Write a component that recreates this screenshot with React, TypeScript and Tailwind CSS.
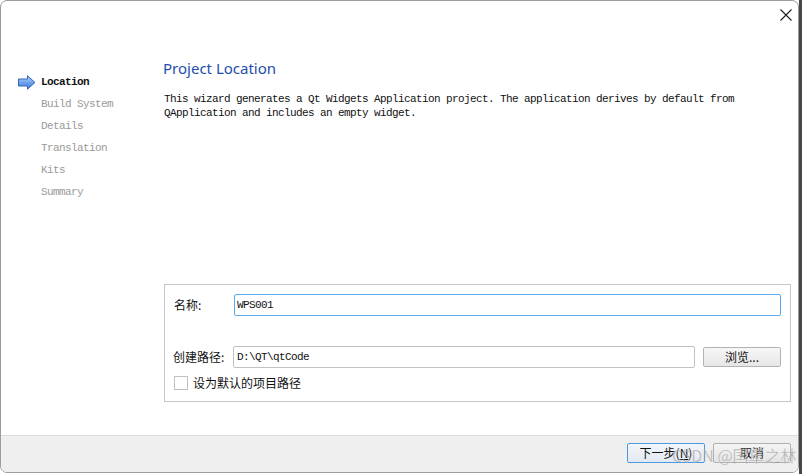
import React from "react";

const mono = { fontFamily: '"Liberation Mono", "Noto Sans CJK SC", monospace' };
const cjk = { fontFamily: '"Noto Sans CJK SC", "Noto Sans", sans-serif' };

function Arrow() {
  return (
    <svg width="18" height="15" viewBox="0 0 18 15">
      <defs>
        <linearGradient id="ag" x1="0" y1="0" x2="0" y2="1">
          <stop offset="0" stopColor="#b9d6fb" />
          <stop offset="0.5" stopColor="#6fa4ec" />
          <stop offset="1" stopColor="#3f79d6" />
        </linearGradient>
      </defs>
      <path d="M0.5 4 H9.5 V0.8 L17 7.5 L9.5 14.2 V11 H0.5 Z" fill="url(#ag)" stroke="#3567b8" strokeWidth="1" strokeLinejoin="round" />
    </svg>
  );
}

export default function App() {
  const steps = ["Location", "Build System", "Details", "Translation", "Kits", "Summary"];
  return (
    <div className="w-[802px] h-[474px] bg-white flex overflow-hidden">
      <div className="w-[799px] h-[473px] flex flex-col border border-[#9c9c9c] rounded-[7px] overflow-hidden bg-white relative">
        <div className="h-[30px] flex justify-end items-start pr-[5px] pt-[6px] shrink-0">
          <svg width="14" height="14" viewBox="0 0 14 14" className="mt-[1px]">
            <path d="M1.5 1.5 L12.5 12.5 M12.5 1.5 L1.5 12.5" stroke="#1a1a1a" strokeWidth="1.1" />
          </svg>
        </div>
        <div className="flex-1 flex min-h-0">
          <div className="w-[162px] shrink-0 pl-[17px] pt-[40px] flex flex-col">
            {steps.map((s, i) => (
              <div key={s} className="h-[22px] flex items-center">
                <div className="w-[23px] flex items-center">{i === 0 ? <Arrow /> : null}</div>
                <span
                  style={mono}
                  className={`text-[11px] tracking-[-0.6px] ${i === 0 ? "text-[#111] font-bold" : "text-[#9a9a9a]"}`}
                >
                  {s}
                </span>
              </div>
            ))}
          </div>
          <div className="flex-1 flex flex-col pt-[26px] pr-[7px] pb-[33px]">
            <div className="h-[22px] flex items-center text-[15px] text-[#1f4eab]" style={{ fontFamily: '"Noto Sans", "Open Sans", sans-serif' }}>
              Project Location
            </div>
            <div style={mono} className="mt-[13px] pl-[1px] text-[11px] tracking-[-0.6px] leading-[14px] text-[#111] whitespace-pre">
              {"This wizard generates a Qt Widgets Application project. The application derives by default from\nQApplication and includes an empty widget."}
            </div>
            <div className="flex-1" />
            <div className="ml-[1px] border border-[#c6c6c6] pt-[9px] pb-[11px] pl-[9px] pr-[9px] flex flex-col">
              <div className="flex items-center h-[22px]">
                <div style={cjk} className="w-[60px] text-[12px] text-[#111]">名称:</div>
                <div className="flex-1 h-[22px] border border-[#5aaaf0] rounded-[2px] flex items-center pl-[2px]">
                  <span style={mono} className="text-[11px] tracking-[-0.6px] text-[#111]">WPS001</span>
                </div>
              </div>
              <div className="flex items-center h-[22px] mt-[30px]">
                <div style={cjk} className="w-[60px] text-[12px] text-[#111] -ml-[1px]">创建路径:</div>
                <div className="flex-1 h-[22px] border border-[#c2c2c2] rounded-[2px] flex items-center pl-[3px]">
                  <span style={mono} className="text-[11px] tracking-[-0.6px] text-[#111]">D:\QT\qtCode</span>
                </div>
                <div style={cjk} className="ml-[8px] w-[78px] h-[20px] border border-[#b3b3b3] rounded-[2px] bg-gradient-to-b from-[#f7f7f7] to-[#e6e6e6] flex items-center justify-center text-[12px] text-[#111]">
                  浏览...
                </div>
              </div>
              <div className="flex items-center mt-[8px] h-[14px]">
                <div className="w-[14px] h-[14px] border border-[#c0c0c0] bg-white" />
                <span style={cjk} className="ml-[5px] text-[12px] text-[#111]">设为默认的项目路径</span>
              </div>
            </div>
          </div>
        </div>
        <div className="h-[37px] shrink-0 bg-[#efefef] border-t border-[#dcdcdc] flex items-center justify-end gap-[8px] pr-[7px] pb-[2px]">
          <div style={cjk} className="w-[78px] h-[20px] border border-[#4d98e0] rounded-[2px] bg-gradient-to-b from-[#f2f6fb] to-[#e3e9f1] flex items-center justify-center text-[12px] text-[#111]">
            下一步(<span className="underline">N</span>)
          </div>
          <div style={cjk} className="w-[78px] h-[20px] border border-[#b0b0b0] rounded-[2px] bg-gradient-to-b from-[#f5f5f5] to-[#e4e4e4] flex items-center justify-center text-[12px] text-[#111]">
            取消
          </div>
        </div>
        <div
          style={{ ...cjk, WebkitTextStroke: "0.3px rgba(255,255,255,0.6)" }}
          className="absolute left-[671px] top-[444px] text-[16px] leading-[20px] text-[#8a8a8a]/60 pointer-events-none"
        >
          CSDN @国草之林
        </div>
      </div>
      <div className="w-[3px] h-full bg-[#474747]" />
    </div>
  );
}
